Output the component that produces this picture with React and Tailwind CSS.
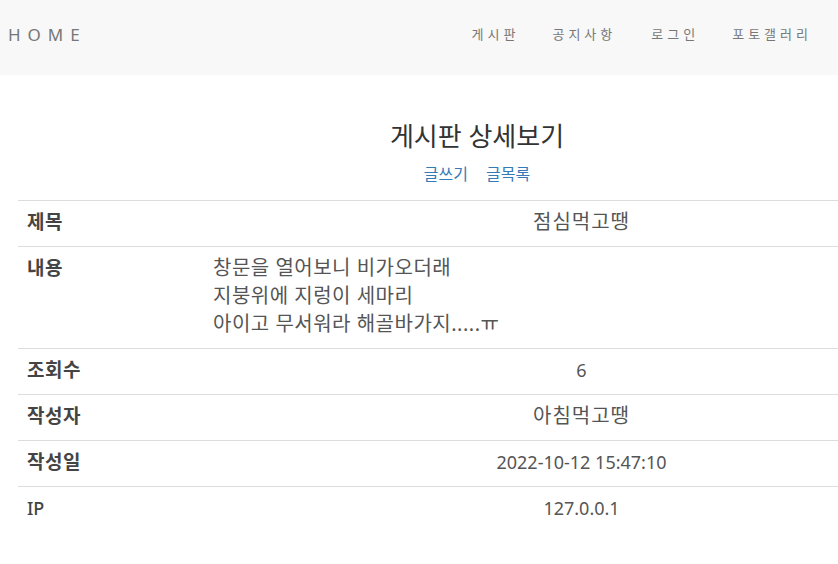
import React from "react";

const rows = [
  { label: "제목", value: "점심먹고땡", ko: true },
  { label: "내용", lines: ["창문을 열어보니 비가오더래", "지붕위에 지렁이 세마리", "아이고 무서워라 해골바가지.....ㅠ"] },
  { label: "조회수", value: "6" },
  { label: "작성자", value: "아침먹고땡", ko: true },
  { label: "작성일", value: "2022-10-12 15:47:10" },
  { label: "IP", value: "127.0.0.1", latinLabel: true },
];

export default function App() {
  return (
    <div
      className="w-[838px] h-[564px] overflow-hidden bg-white text-[#333]"
      style={{ fontFamily: '"Noto Sans", "Noto Sans CJK KR", sans-serif' }}
    >
      <header className="h-[75px] bg-[#f8f8f8] flex items-center justify-between pb-[6px]">
        <div className="pl-[8px] text-[17px] tracking-[7px] text-[#777] font-normal">HOME</div>
        <nav className="flex items-center text-[13px] tracking-[4px] text-[#777] pr-[26px]">
          <span className="mr-[33px]">게시판</span>
          <span className="mr-[35px]">공지사항</span>
          <span className="mr-[33px]">로그인</span>
          <span>포토갤러리</span>
        </nav>
      </header>
      <div className="pl-[18px]">
        <div className="w-[918px] text-center">
          <h2 className="pt-[43px] text-[26px] leading-[36px] text-[#333] font-normal">게시판 상세보기</h2>
          <div className="mt-[9px] text-[16px] leading-[22px] text-[#337ab7] flex justify-center gap-[18px]">
            <span>글쓰기</span>
            <span>글목록</span>
          </div>
        </div>
        <table className="mt-[15px] w-[940px] border-collapse text-[18px] leading-[28px]">
          <tbody>
            {rows.map((r) => (
              <tr key={r.label} className="border-t border-[#dddddd]">
                <td
                  className={
                    r.latinLabel
                      ? "w-[187px] pt-[7px] pb-[10px] pl-[9px] align-top font-medium text-[18px] text-[#444]"
                      : "w-[187px] pt-[7px] pb-[10px] pl-[9px] align-top font-bold text-[19px] tracking-[0.5px] text-[#444]"
                  }
                >
                  {r.label}
                </td>
                {r.lines ? (
                  <td className="pt-[7px] pb-[10px] pl-[8px] text-left text-[20px] tracking-[0.5px] text-[#555]">
                    {r.lines.map((l) => (
                      <div key={l}>{l}</div>
                    ))}
                  </td>
                ) : (
                  <td
                    className={
                      r.ko
                        ? "pt-[7px] pb-[10px] text-center text-[20px] tracking-[1px] text-[#555]"
                        : "pt-[7px] pb-[10px] text-center text-[18px] text-[#555]"
                    }
                  >
                    {r.value}
                  </td>
                )}
              </tr>
            ))}
          </tbody>
        </table>
      </div>
    </div>
  );
}
